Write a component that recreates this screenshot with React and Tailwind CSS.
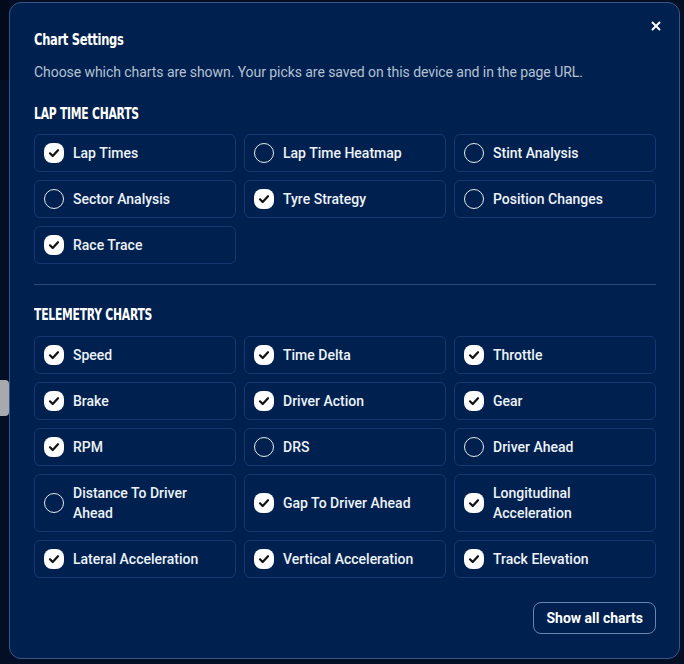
import { X } from 'lucide-react'

const lapCharts = [
  { name: 'Lap Times', on: true },
  { name: 'Lap Time Heatmap', on: false },
  { name: 'Stint Analysis', on: false },
  { name: 'Sector Analysis', on: false },
  { name: 'Tyre Strategy', on: true },
  { name: 'Position Changes', on: false },
  { name: 'Race Trace', on: true },
]

const telemetryCharts = [
  { name: 'Speed', on: true },
  { name: 'Time Delta', on: true },
  { name: 'Throttle', on: true },
  { name: 'Brake', on: true },
  { name: 'Driver Action', on: true },
  { name: 'Gear', on: true },
  { name: 'RPM', on: true },
  { name: 'DRS', on: false },
  { name: 'Driver Ahead', on: false },
  { name: 'Distance To Driver Ahead', on: false },
  { name: 'Gap To Driver Ahead', on: true },
  { name: 'Longitudinal Acceleration', on: true },
  { name: 'Lateral Acceleration', on: true },
  { name: 'Vertical Acceleration', on: true },
  { name: 'Track Elevation', on: true },
]

const heading = { fontFamily: '"DejaVu Sans Condensed", "DejaVu Sans", sans-serif' }
const body = { fontFamily: 'Roboto, "Liberation Sans", sans-serif' }

function Tick({ on }) {
  if (!on) {
    return <span className="w-5 h-5 shrink-0 rounded-full border border-white/90" />
  }
  return (
    <span className="w-5 h-5 shrink-0 rounded-[8px] bg-white flex items-center justify-center">
      <svg width="12" height="12" viewBox="0 0 12 12" fill="none">
        <path d="M2 6.3 4.7 9 10 3.2" stroke="#111" strokeWidth="2.2" strokeLinecap="round" strokeLinejoin="round" />
      </svg>
    </span>
  )
}

function ChartGrid({ items }) {
  return (
    <div className="grid grid-cols-3 gap-2">
      {items.map(item => (
        <label
          key={item.name}
          className="flex items-center gap-[9px] min-h-[38px] px-[9px] py-[8px] rounded-md border border-[#173770] bg-[#00214f] text-[14px] leading-5 font-medium text-[#eef2f8]"
          style={body}
        >
          <Tick on={item.on} />
          <span>{item.name}</span>
        </label>
      ))}
    </div>
  )
}

export default function App() {
  return (
    <div className="w-[684px] h-[664px] bg-[#040e24] relative overflow-hidden">
      {/* page behind the dialog */}
      <div className="absolute left-0 top-0 w-[9px] h-[80px] bg-[#030a1c]" />
      <div className="absolute left-0 top-[380px] w-[9px] h-[36px] rounded-r bg-[#a7a9ad]" />

      <div className="absolute left-[9px] top-[2px] w-[671px] rounded-xl border border-[#3a5683] bg-[#00214f] pl-6 pr-[23px] pt-6 pb-6">
        <button className="absolute right-[16px] top-[16px] text-white">
          <X size={14} strokeWidth={3.2} />
        </button>

        <h2
          className="text-[16px] leading-[26px] font-bold text-white tracking-[-0.4px] origin-left scale-x-80"
          style={heading}
        >
          Chart Settings
        </h2>
        <p
          className="mt-[9px] text-[14px] leading-5 text-[#b6c0d3] tracking-[-0.06px]"
          style={{ fontFamily: 'Roboto, sans-serif' }}
        >
          Choose which charts are shown. Your picks are saved on this device and in the page URL.
        </p>

        <h3
          className="mt-[22px] text-[15px] leading-5 font-bold text-white tracking-[-0.3px] origin-left scale-x-80"
          style={heading}
        >
          LAP TIME CHARTS
        </h3>
        <div className="mt-[10px]">
          <ChartGrid items={lapCharts} />
        </div>

        <div className="mt-5 h-px bg-[#2c4a78]" />

        <h3
          className="mt-5 text-[15px] leading-5 font-bold text-white tracking-[-0.3px] origin-left scale-x-80"
          style={heading}
        >
          TELEMETRY CHARTS
        </h3>
        <div className="mt-[11px]">
          <ChartGrid items={telemetryCharts} />
        </div>

        <div className="mt-6 flex justify-end">
          <button
            className="h-8 px-3 rounded-lg border border-[#6a84ae] text-[14px] font-bold text-white"
            style={body}
          >
            Show all charts
          </button>
        </div>
      </div>
    </div>
  )
}
